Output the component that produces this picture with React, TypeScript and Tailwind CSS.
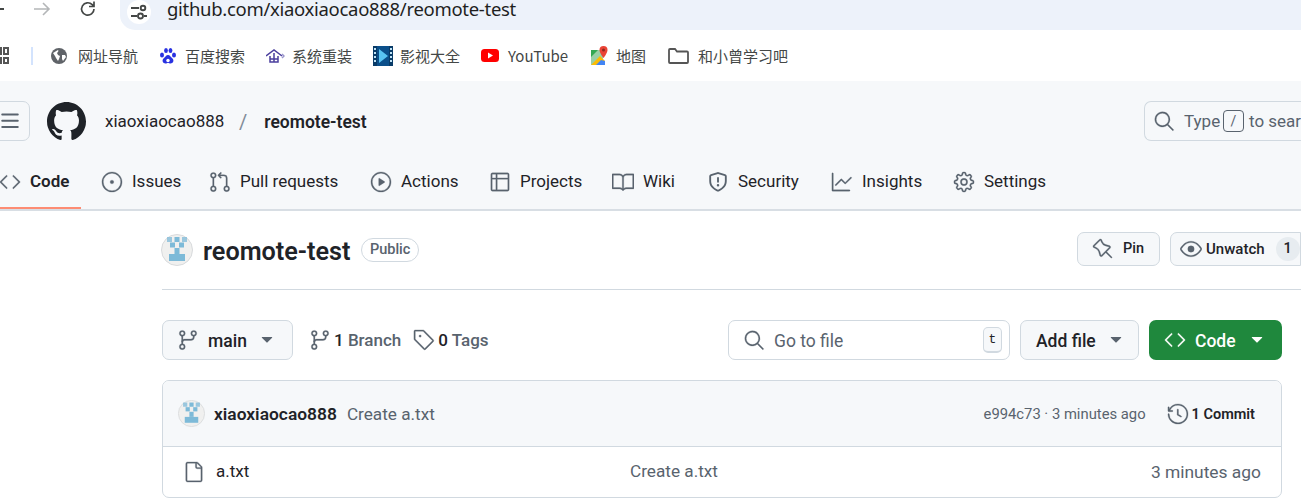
import React from "react";
import {
  GoCode, GoIssueOpened, GoGitPullRequest, GoPlay, GoTable, GoBook, GoGraph, GoGear,
  GoPin, GoEye, GoSearch, GoGitBranch, GoTag, GoHistory, GoFile, GoTriangleDown,
} from "react-icons/go";
import type { IconType } from "react-icons";

const CJK = "font-['Noto_Sans_CJK_SC','Noto_Sans',sans-serif]";

function Ico({ as: C, color = "#59636e", className = "" }: { as: IconType; color?: string; className?: string }) {
  return (
    <span className={`inline-flex w-[20px] h-[20px] items-center justify-center shrink-0 ${className}`}>
      <C size={22} color={color} className="shrink-0" style={{ stroke: color, strokeWidth: 0.3 }} />
    </span>
  );
}

function ShieldIcon() {
  return (
    <svg width="20" height="20" viewBox="0 0 16 16" fill="#59636e" className="shrink-0">
      <path d="M7.467.133a1.748 1.748 0 0 1 1.066 0l5.25 1.68A1.75 1.75 0 0 1 15 3.48V7c0 1.566-.32 3.182-1.303 4.682-.983 1.498-2.585 2.813-5.032 3.855a1.697 1.697 0 0 1-1.33 0c-2.447-1.042-4.049-2.357-5.032-3.855C1.32 10.182 1 8.566 1 7V3.48a1.75 1.75 0 0 1 1.217-1.667Zm.61 1.429a.25.25 0 0 0-.153 0l-5.25 1.68a.25.25 0 0 0-.174.238V7c0 1.358.275 2.666 1.057 3.86.784 1.194 2.121 2.34 4.366 3.297a.196.196 0 0 0 .154 0c2.245-.956 3.582-2.104 4.366-3.298C13.225 9.666 13.5 8.36 13.5 7V3.48a.251.251 0 0 0-.174-.237l-5.25-1.68ZM8.75 4.75v3a.75.75 0 0 1-1.5 0v-3a.75.75 0 0 1 1.5 0ZM9 10.5a1 1 0 1 1-2 0 1 1 0 0 1 2 0Z" />
    </svg>
  );
}

function Identicon({ size, className = "" }: { size: number; className?: string }) {
  return (
    <svg width={size} height={size} viewBox="0 0 32 32" className={`shrink-0 ${className}`}>
      <circle cx="16" cy="16" r="15.5" fill="#f0f0ef" stroke="#d8dadc" />
      <g fill="#7dbad8">
        <rect x="6" y="3" width="5" height="5" opacity="0.75" />
        <rect x="13.5" y="3" width="5" height="5" />
        <rect x="21" y="3" width="5" height="5" opacity="0.75" />
        <rect x="9" y="8.5" width="5" height="5" />
        <rect x="18" y="8.5" width="5" height="5" />
        <rect x="13.5" y="14" width="5" height="6" />
        <rect x="8" y="20" width="16" height="7" />
      </g>
    </svg>
  );
}

function Bookmark({ icon, label, gap, ml }: { icon: React.ReactNode; label: string; gap: string; ml: string }) {
  return (
    <div className={`flex items-center ${ml}`}>
      {icon}
      <span className={`${gap} ${CJK} text-[15px] leading-5 text-[#444746] whitespace-nowrap`}>{label}</span>
    </div>
  );
}

function Tab({ icon, label, active, w }: { icon: React.ReactNode; label: string; active?: boolean; w: string }) {
  return (
    <div className="flex items-center">
      {icon}
      <span className={`ml-[10px] ${w} text-[17px] whitespace-nowrap text-[#1f2328] ${active ? "font-semibold" : ""}`}>{label}</span>
    </div>
  );
}

export default function App() {
  return (
    <div className="w-[1301px] h-[499px] overflow-hidden bg-white font-['Roboto','Noto_Sans',sans-serif] text-[#1f2328]">
      {/* browser toolbar */}
      <div className="h-[30px] flex items-start bg-white">
        <div className="w-[120px] h-[18px] flex items-center shrink-0">
          <div className="w-[4px] h-[2px] bg-[#444746]" />
          <svg width="18" height="18" viewBox="0 0 18 18" className="ml-[29px]" fill="none" stroke="#b4b6b8" strokeWidth="1.6">
            <path d="M1 9h15M10 3l6 6-6 6" />
          </svg>
          <svg width="18" height="18" viewBox="0 0 18 18" className="ml-[28px]" fill="none" stroke="#444746" strokeWidth="1.7">
            <path d="M15 9a6.2 6.2 0 1 1-1.8-4.4L15 6.4M15 1.5v5h-5" />
          </svg>
        </div>
        <div className="flex-1 h-[30px] bg-[#edf2fa] rounded-bl-[15px] flex items-start pl-[7px]">
          <div className="w-[24px] h-[24px] rounded-full bg-white flex items-center justify-center">
            <svg width="18" height="18" viewBox="0 0 18 18" fill="none" stroke="#444746" strokeWidth="1.9">
              <path d="M1 5h8M1 13h6M14 13h3" />
              <circle cx="13" cy="5" r="2.3" />
              <circle cx="10.5" cy="13" r="2.5" />
            </svg>
          </div>
          <span className="ml-[16px] text-[18.5px] leading-[18px] text-[#1f1f1f] font-['Noto_Sans',sans-serif] tracking-[-0.3px] whitespace-nowrap">
            github.com/xiaoxiaocao888/reomote-test
          </span>
        </div>
      </div>

      {/* bookmarks bar */}
      <div className="h-[51px] flex items-center bg-white">
        <div className="flex gap-[1px] shrink-0">
          <div className="w-[2px] flex flex-col gap-[2px]">
            <div className="h-[8px] bg-[#555]" />
            <div className="h-[7px] bg-[#555]" />
          </div>
          <div className="w-[6px] flex flex-col gap-[2px]">
            <div className="h-[8px] border-2 border-[#555]" />
            <div className="h-[7px] border-2 border-[#555]" />
          </div>
        </div>
        <div className="ml-[22px] w-[2px] h-[18px] bg-[#d3e3fd]" />
        <Bookmark
          ml="ml-[18px]"
          gap="ml-[11px]"
          label="网址导航"
          icon={
            <svg width="16" height="16" viewBox="0 0 16 16">
              <circle cx="8" cy="8" r="8" fill="#5f6368" />
              <path d="M2 5c2-1 3-2 5-3 1 1 0 2-1 3l1 2 2 1-1 3-1 2-2-3-1-2zM11 7l3 0 1 2-3 4-1-2z" fill="#fff" />
            </svg>
          }
        />
        <Bookmark
          ml="ml-[21px]"
          gap="ml-[8px]"
          label="百度搜索"
          icon={
            <svg width="18" height="18" viewBox="0 0 18 18" fill="#2932e1">
              <ellipse cx="3" cy="8" rx="2" ry="2.6" />
              <ellipse cx="7" cy="3.5" rx="1.9" ry="2.6" />
              <ellipse cx="11.5" cy="3.5" rx="1.9" ry="2.6" />
              <ellipse cx="15" cy="8" rx="2" ry="2.6" />
              <path d="M9 8c2 0 2.5 2 4.5 3.5 2 2 .5 5-2 5-1 0-1.5-.5-2.5-.5s-1.5.5-2.5.5c-2.5 0-4-3-2-5C6.5 10 7 8 9 8z" />
              <circle cx="9" cy="13.5" r="1.7" fill="#fff" />
            </svg>
          }
        />
        <Bookmark
          ml="ml-[21px]"
          gap="ml-[7px]"
          label="系统重装"
          icon={
            <svg width="19" height="14" viewBox="0 0 19 14" fill="none" stroke="#4b3f9e" strokeWidth="1.5">
              <path d="M0 7L8 1l8 6" />
              <path d="M4 7v6h8V7M4 10h8M8 4v9" />
              <path d="M16 5l2 2-2 2" stroke="#9b96cc" />
            </svg>
          }
        />
        <Bookmark
          ml="ml-[21px]"
          gap="ml-[7px]"
          label="影视大全"
          icon={
            <svg width="20" height="20" viewBox="0 0 20 20">
              <rect width="20" height="20" fill="#0b4f8a" />
              <path d="M0 0h4v20H0zM16 0h4v20h-4z" fill="#083b68" />
              <path d="M1 2h2v2H1zM1 6h2v2H1zM1 10h2v2H1zM1 14h2v2H1zM17 2h2v2h-2zM17 6h2v2h-2zM17 10h2v2h-2zM17 14h2v2h-2z" fill="#bfe3f7" />
              <path d="M6 3l9 7-9 7z" fill="#59c4f2" />
            </svg>
          }
        />
        <Bookmark
          ml="ml-[21px]"
          gap="ml-[9px]"
          label="YouTube"
          icon={
            <svg width="18" height="13" viewBox="0 0 18 13">
              <rect width="18" height="13" rx="3.5" fill="#ff0000" />
              <path d="M7 3.5l5 3-5 3z" fill="#fff" />
            </svg>
          }
        />
        <Bookmark
          ml="ml-[23px]"
          gap="ml-[8px]"
          label="地图"
          icon={
            <svg width="17" height="20" viewBox="0 0 17 20">
              <path d="M0 4h12v15H0z" fill="#9ad0a5" />
              <path d="M0 4h7L0 11z" fill="#34a853" />
              <path d="M0 19l9-9 5 5v4z" fill="#fbbc04" />
              <path d="M5 19l5-5 4 1v4z" fill="#4285f4" />
              <path d="M12.5 0a4 4 0 0 1 4 4c0 3-4 8-4 8s-4-5-4-8a4 4 0 0 1 4-4z" fill="#ea4335" />
              <circle cx="12.5" cy="4" r="1.5" fill="#8c2a20" />
            </svg>
          }
        />
        <Bookmark
          ml="ml-[22px]"
          gap="ml-[9px]"
          label="和小曾学习吧"
          icon={
            <svg width="21" height="16" viewBox="0 0 21 16" fill="none" stroke="#555" strokeWidth="1.8">
              <path d="M1 2a1 1 0 0 1 1-1h5l2 2.5h10a1 1 0 0 1 1 1V14a1 1 0 0 1-1 1H2a1 1 0 0 1-1-1z" />
            </svg>
          }
        />
      </div>

      {/* GitHub header */}
      <div className="h-[130px] bg-[#f6f8fa] border-b-2 border-[#d8dee4] flex flex-col">
        <div className="h-[40px] mt-[20px] flex items-center shrink-0">
          <div className="w-[40px] h-[40px] -ml-[10px] rounded-[7px] border border-[#d1d9e0] flex items-center justify-center shrink-0">
            <svg width="20" height="20" viewBox="0 0 16 16" fill="#59636e">
              <path d="M1 2.75A.75.75 0 0 1 1.75 2h12.5a.75.75 0 0 1 0 1.5H1.75A.75.75 0 0 1 1 2.75Zm0 5A.75.75 0 0 1 1.75 7h12.5a.75.75 0 0 1 0 1.5H1.75A.75.75 0 0 1 1 7.75ZM1.75 12h12.5a.75.75 0 0 1 0 1.5H1.75a.75.75 0 0 1 0-1.5Z" />
            </svg>
          </div>
          <svg width="39" height="39" viewBox="0 0 16 16" fill="#1f2328" className="ml-[17px] shrink-0">
            <path d="M8 0c4.42 0 8 3.58 8 8a8.013 8.013 0 0 1-5.45 7.59c-.4.08-.55-.17-.55-.38 0-.27.01-1.13.01-2.2 0-.75-.25-1.23-.54-1.48 1.78-.2 3.65-.88 3.65-3.95 0-.88-.31-1.59-.82-2.15.08-.2.36-1.02-.08-2.12 0 0-.67-.22-2.2.82-.64-.18-1.32-.27-2-.27-.68 0-1.36.09-2 .27-1.53-1.03-2.2-.82-2.2-.82-.44 1.1-.16 1.92-.08 2.12-.51.56-.82 1.28-.82 2.15 0 3.06 1.86 3.75 3.64 3.95-.23.2-.44.55-.51 1.07-.46.21-1.61.55-2.33-.66-.15-.24-.6-.83-1.23-.82-.67.01-.27.38.01.53.34.19.73.9.82 1.13.16.45.68 1.31 2.69.94 0 .67.01 1.3.01 1.49 0 .21-.15.45-.55.38A7.995 7.995 0 0 1 0 8c0-4.42 3.58-8 8-8Z" />
          </svg>
          <span className="ml-[19px] mt-[2px] w-[119px] text-[17px] whitespace-nowrap">xiaoxiaocao888</span>
          <span className="ml-[15px] mt-[2px] text-[20px] text-[#818b98]">/</span>
          <span className="ml-[17px] mt-[2px] text-[17.5px] font-semibold whitespace-nowrap">reomote-test</span>
          <div className="ml-auto w-[157px] h-[40px] shrink-0 rounded-l-[7px] border border-r-0 border-[#d1d9e0] flex items-center pl-[9px] text-[#59636e] overflow-hidden">
            <Ico as={GoSearch} />
            <span className="ml-[10px] mt-[2px] w-[36px] text-[17px] whitespace-nowrap">Type</span>
            <span className="ml-[3px] w-[21px] h-[22px] shrink-0 rounded-[4px] border border-[#59636e] flex items-center justify-center text-[14px]">/</span>
            <span className="ml-[5px] mt-[2px] text-[17px] whitespace-nowrap">to search</span>
          </div>
        </div>
        <div className="relative h-[48px] mt-[19px] pb-[4px] flex items-center gap-[31px]">
          <Tab w="w-[41px]" icon={<Ico as={GoCode} />} label="Code" active />
          <span className="absolute left-0 bottom-[-1px] w-[81px] h-[2px] bg-[#fd8c73]" />
          <Tab w="w-[47px]" icon={<Ico as={GoIssueOpened} />} label="Issues" />
          <Tab w="w-[100px]" icon={<Ico as={GoGitPullRequest} />} label="Pull requests" />
          <Tab w="w-[58px]" icon={<Ico as={GoPlay} />} label="Actions" />
          <Tab w="w-[62px]" icon={<Ico as={GoTable} />} label="Projects" />
          <Tab w="w-[34px]" icon={<Ico as={GoBook} />} label="Wiki" />
          <Tab w="w-[63px]" icon={<ShieldIcon />} label="Security" />
          <Tab w="w-[61px]" icon={<Ico as={GoGraph} />} label="Insights" />
          <Tab w="w-[62px]" icon={<Ico as={GoGear} />} label="Settings" />
        </div>
      </div>

      {/* repo */}
      <div className="ml-[162px] w-[1139px]">
        <div className="h-[79px] flex items-start border-b border-[#d1d9e0] pt-[22px]">
          <Identicon size={32} className="-ml-[1px] mt-[1px]" />
          <span className="ml-[10px] text-[25.2px] leading-[38px] font-semibold whitespace-nowrap text-[#1f2328]">reomote-test</span>
          <span className="ml-[11px] mt-[5px] h-[24px] px-[7.5px] rounded-full border border-[#d1d9e0] text-[14.5px] leading-[22px] font-medium text-[#59636e]">Public</span>
          <div className="ml-auto flex gap-[10px] -mt-[1px]">
            <button className="w-[83px] h-[34px] rounded-[7px] border border-[#d1d9e0] bg-[#f6f8fa] flex items-center justify-center text-[14.5px] font-medium">
              <Ico as={GoPin} />
              <span className="ml-[10px]">Pin</span>
            </button>
            <button className="w-[131px] h-[34px] rounded-l-[7px] border border-[#d1d9e0] bg-[#f6f8fa] flex items-center pl-[10px] text-[15px] font-medium">
              <Ico as={GoEye} />
              <span className="ml-[5px] whitespace-nowrap">Unwatch</span>
              <span className="ml-[11px] w-[24px] h-[24px] shrink-0 rounded-full bg-[#e7ecf0] flex items-center justify-center text-[14.5px]">1</span>
            </button>
          </div>
        </div>

        <div className="w-[1120px] mt-[30px] h-[40px] flex items-center">
          <button className="w-[131px] h-[40px] rounded-[7px] border border-[#d1d9e0] bg-[#f6f8fa] flex items-center pl-[15px]">
            <Ico as={GoGitBranch} />
            <span className="ml-[10px] mt-[2px] text-[17.5px] font-medium">main</span>
            <GoTriangleDown size={20} color="#59636e" className="ml-[10px]" />
          </button>
          <Ico as={GoGitBranch} className="ml-[17px]" />
          <span className="ml-[4px] mt-[2px] text-[17px] font-medium whitespace-nowrap">1 <span className="text-[#59636e]">Branch</span></span>
          <Ico as={GoTag} className="ml-[13px]" />
          <span className="ml-[4px] mt-[2px] text-[17px] font-medium whitespace-nowrap">0 <span className="text-[#59636e]">Tags</span></span>
          <div className="ml-auto w-[282px] h-[40px] rounded-[7px] border border-[#d1d9e0] bg-white flex items-center pl-[15px] pr-[7px]">
            <Ico as={GoSearch} />
            <span className="ml-[10px] mt-[2px] text-[17.5px] text-[#59636e]">Go to file</span>
            <span className="ml-auto w-[19px] h-[26px] rounded-[5px] border border-[#d1d9e0] border-b-2 bg-[#f6f8fa] flex items-center justify-center font-['Liberation_Mono',monospace] text-[13px]">t</span>
          </div>
          <button className="ml-[10px] w-[119px] h-[40px] rounded-[7px] border border-[#d1d9e0] bg-[#f6f8fa] flex items-center pl-[15px] text-[17.5px] font-medium whitespace-nowrap">
            <span className="mt-[2px]">Add file</span>
            <GoTriangleDown size={20} color="#59636e" className="ml-[10px]" />
          </button>
          <button className="ml-[10px] w-[133px] h-[40px] rounded-[7px] bg-[#1f883d] text-white flex items-center pl-[16px] text-[17.5px] font-medium">
            <Ico as={GoCode} color="#ffffff" />
            <span className="ml-[10px] mt-[2px]">Code</span>
            <GoTriangleDown size={20} className="ml-[11px]" />
          </button>
        </div>

        <div className="w-[1120px] mt-[20px] h-[118px] rounded-[7px] border border-[#d1d9e0] overflow-hidden flex flex-col">
          <div className="h-[66px] bg-[#f6f8fa] border-b border-[#d1d9e0] flex items-center pl-[15px] pr-[26px] shrink-0">
            <Identicon size={27} />
            <span className="ml-[9px] mt-[2px] text-[17.4px] font-semibold whitespace-nowrap">xiaoxiaocao888</span>
            <span className="ml-[10px] mt-[2px] text-[17.2px] text-[#59636e] whitespace-nowrap">Create a.txt</span>
            <span className="ml-auto mt-[2px] text-[14.8px] text-[#59636e] whitespace-nowrap">e994c73 · 3 minutes ago</span>
            <Ico as={GoHistory} className="ml-[22px]" />
            <span className="ml-[4px] mt-[2px] text-[14.5px] font-semibold whitespace-nowrap">1 Commit</span>
          </div>
          <div className="flex-1 flex items-center pl-[21px] pr-[20px]">
            <Ico as={GoFile} />
            <span className="ml-[12px] w-[414px] text-[17px]">a.txt</span>
            <span className="text-[17.2px] text-[#59636e] whitespace-nowrap">Create a.txt</span>
            <span className="ml-auto text-[17.4px] text-[#59636e] whitespace-nowrap">3 minutes ago</span>
          </div>
        </div>
      </div>
    </div>
  );
}
